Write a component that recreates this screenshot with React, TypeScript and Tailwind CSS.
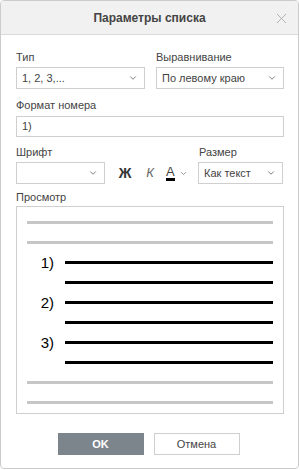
import { ChevronDown, X } from 'lucide-react';

function Select({ value, className }: { value: string; className: string }) {
  return (
    <div className={`h-[22px] border border-[#cfcfcf] bg-white flex items-center justify-between pl-[5px] pr-[6px] ${className}`}>
      <span className="text-[11px] text-[#444]">{value}</span>
      <ChevronDown size={10} strokeWidth={2} className="text-[#666]" />
    </div>
  );
}

function Line({ gray, indent }: { gray?: boolean; indent?: boolean }) {
  return (
    <div className={`h-[3px] ${gray ? 'bg-[#c6c6c6] w-[246px]' : 'bg-black w-[208px]'} ${indent ? 'ml-[38px]' : ''}`} />
  );
}

export default function App() {
  const items = ['1)', '2)', '3)'];
  return (
    <div className="w-[300px] h-[470px] bg-white" style={{ fontFamily: '"Liberation Sans", Arial, sans-serif' }}>
      <div className="w-[299px] h-[469px] border border-[#cbcbcb] rounded-[4px] overflow-hidden flex flex-col">
        <div className="h-[34px] bg-[#f1f1f1] border-b border-[#dadada] flex items-center justify-center relative">
          <span className="text-[12px] font-bold text-[#444]">Параметры списка</span>
          <X size={17} strokeWidth={1.1} className="absolute right-[8px] top-[9px] text-[#a0a0a0]" />
        </div>

        <div className="px-[15px] pt-[16px] flex flex-col">
          <div className="flex gap-[11px]">
            <div className="flex flex-col gap-[3px]">
              <span className="text-[11px] text-[#444] leading-[13px]">Тип</span>
              <Select value="1, 2, 3,..." className="w-[129px]" />
            </div>
            <div className="flex flex-col gap-[3px]">
              <span className="text-[11px] text-[#444] leading-[13px]">Выравнивание</span>
              <Select value="По левому краю" className="w-[128px]" />
            </div>
          </div>

          <span className="text-[11px] text-[#444] leading-[13px] mt-[10px]">Формат номера</span>
          <div className="mt-[4px] h-[21px] w-[268px] border border-[#cfcfcf] flex items-center pl-[5px]">
            <span className="text-[11px] text-[#444]">1)</span>
          </div>

          <div className="flex mt-[9px] items-end">
            <div className="flex flex-col gap-[3px]">
              <span className="text-[11px] text-[#444] leading-[13px]">Шрифт</span>
              <Select value="" className="w-[89px]" />
            </div>
            <div className="h-[22px] flex items-center ml-[10px]">
              <span className="text-[14px] font-bold text-[#333] w-[20px] text-center">Ж</span>
              <span className="text-[13px] italic text-[#666] w-[20px] text-center ml-[5px]">К</span>
              <div className="ml-[6px] flex items-center">
                <span className="text-[13px] text-[#444] border-b-[3px] border-black leading-[13px]">A</span>
                <ChevronDown size={9} strokeWidth={2} className="text-[#777] ml-[4px]" />
              </div>
            </div>
            <div className="flex flex-col gap-[3px] ml-auto">
              <span className="text-[11px] text-[#444] leading-[13px] pl-[1px]">Размер</span>
              <Select value="Как текст" className="w-[85px]" />
            </div>
          </div>

          <span className="text-[11px] text-[#444] leading-[13px] mt-[7px]">Просмотр</span>
          <div className="mt-[2px] w-[268px] h-[208px] border border-[#cfcfcf] pt-[14px] pl-[10px] flex flex-col gap-[17px]">
            <Line gray />
            <Line gray />
            {items.map((n) => (
              <div key={n} className="flex flex-col gap-[17px]">
                <div className="flex items-center h-[3px]">
                  <span className="w-[38px] pr-[11px] text-right text-[15px] text-black leading-none">{n}</span>
                  <Line />
                </div>
                <Line indent />
              </div>
            ))}
            <Line gray />
            <Line gray />
          </div>

          <div className="flex justify-center gap-[10px] mt-[19px] pr-[2px]">
            <div className="w-[86px] h-[22px] bg-[#7d858c] flex items-center justify-center">
              <span className="text-[11px] font-bold text-white">OK</span>
            </div>
            <div className="w-[86px] h-[22px] border border-[#cfcfcf] bg-white flex items-center justify-center">
              <span className="text-[11px] text-[#444]">Отмена</span>
            </div>
          </div>
        </div>
      </div>
    </div>
  );
}
